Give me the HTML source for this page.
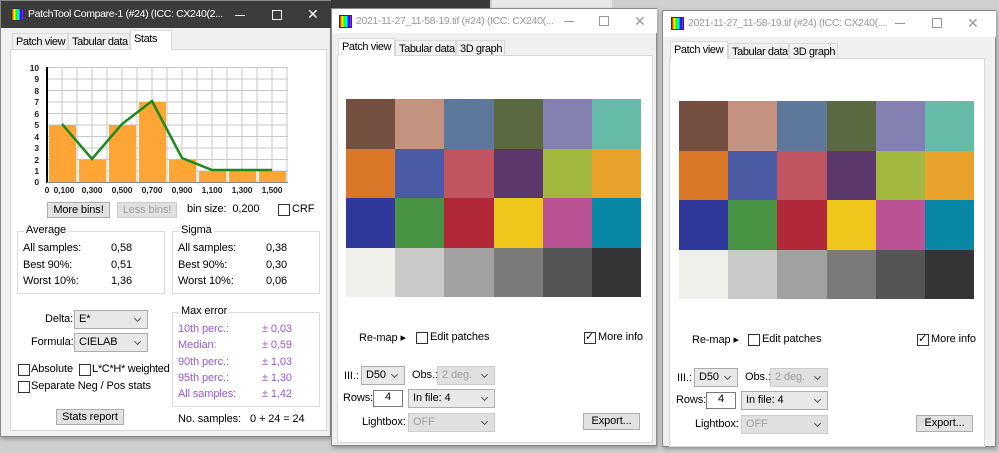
<!DOCTYPE html>
<html><head><meta charset="utf-8"><style>
*{box-sizing:border-box;margin:0;padding:0}
body{width:999px;height:453px;overflow:hidden;background:#cfcfcf;font-family:"Liberation Sans",sans-serif;font-size:11px;color:#000;position:relative;letter-spacing:-0.1px}
.a{position:absolute;white-space:nowrap}
.win{position:absolute;background:#f0f0f0;border:1px solid #888;box-shadow:1px 2px 4px rgba(0,0,0,.3)}
.panel{position:absolute;background:#fff;border:1px solid #d9d9d9}
.tab{position:absolute;background:#f0f0f0;border:1px solid #d9d9d9;padding:2px 3px;font-size:11px;white-space:nowrap;letter-spacing:-0.4px;overflow:hidden}
.tab.on{background:#fff;border-bottom:none;z-index:2}
.btn{position:absolute;background:#e1e1e1;border:1px solid #adadad;text-align:center;font-size:11px;white-space:nowrap;line-height:14px}
.cb{position:absolute;width:12px;height:12px;border:1px solid #333;background:#fff}
.combo{position:absolute;background:#e8e8e8;border:1px solid #adadad;padding:2px 4px;font-size:11px;white-space:nowrap}
.combo:after{content:"";position:absolute;right:7px;top:5px;width:4px;height:4px;border-right:1px solid #555;border-bottom:1px solid #555;transform:rotate(45deg)}
.dis{color:#a0a0a0;background:#e0e0e0;border-color:#ccc}
.grp{position:absolute;border:1px solid #dcdcdc}
.grp>.t{position:absolute;top:-8px;left:6px;background:#fff;padding:0 2px}
.icon{position:absolute;width:13px;height:13px;background:linear-gradient(90deg,#f00,#ff0,#0f0,#0ff,#00f,#f0f);border:1px solid #333}
.p{color:#9b59d8}
.tt{font-size:10.5px;letter-spacing:-0.35px}
.mn{position:absolute;width:10px;height:1px}
.mx{position:absolute;width:10px;height:10px}
</style></head><body>
<div class="a" style="left:330px;top:0;width:160px;height:8px;background:#3a3a3a"></div>
<div class="a" style="left:492px;top:0;width:120px;height:8px;background:#e8e8e8"></div>

<!-- LEFT WINDOW -->
<div class="win" style="left:0;top:0;width:331px;height:437px">
 <div class="a" style="left:0;top:0;width:330px;height:27px;background:#3c3c3c"></div>
 <div class="icon" style="left:10px;top:7px"></div>
 <div class="a tt" style="left:27px;top:7px;color:#fff">PatchTool Compare-1 (#24) (ICC: CX240(2...</div>
 <div class="mn" style="left:234px;top:14px;background:#fff"></div>
 <div class="mx" style="left:271px;top:9px;border:1px solid #fff"></div>
 <div class="a" style="left:306px;top:5px;color:#fff;font-size:14px">✕</div>
 <div class="panel" style="left:9px;top:48px;width:317px;height:382px"></div>
 <div class="tab" style="left:11px;top:32px;height:17px;width:56px">Patch view</div>
 <div class="tab" style="left:67px;top:32px;height:17px;width:62px">Tabular data</div>
 <div class="tab on" style="left:129px;top:29px;height:20px;width:42px">Stats</div>
 <svg class="a" style="left:20px;top:60px" width="280" height="140">
  <g stroke="#c8c8c8" stroke-width="1">
   <line x1="26" y1="6.5" x2="267" y2="6.5"/><line x1="26" y1="18" x2="267" y2="18"/><line x1="26" y1="29.5" x2="267" y2="29.5"/><line x1="26" y1="41" x2="267" y2="41"/><line x1="26" y1="52.5" x2="267" y2="52.5"/><line x1="26" y1="64" x2="267" y2="64"/><line x1="26" y1="75.5" x2="267" y2="75.5"/><line x1="26" y1="87" x2="267" y2="87"/><line x1="26" y1="98.5" x2="267" y2="98.5"/><line x1="26" y1="110" x2="267" y2="110"/>
   <line x1="41" y1="6" x2="41" y2="121"/><line x1="56" y1="6" x2="56" y2="121"/><line x1="71" y1="6" x2="71" y2="121"/><line x1="86" y1="6" x2="86" y2="121"/><line x1="101" y1="6" x2="101" y2="121"/><line x1="116" y1="6" x2="116" y2="121"/><line x1="131" y1="6" x2="131" y2="121"/><line x1="146" y1="6" x2="146" y2="121"/><line x1="161" y1="6" x2="161" y2="121"/><line x1="176" y1="6" x2="176" y2="121"/><line x1="191" y1="6" x2="191" y2="121"/><line x1="206" y1="6" x2="206" y2="121"/><line x1="221" y1="6" x2="221" y2="121"/><line x1="236" y1="6" x2="236" y2="121"/><line x1="251" y1="6" x2="251" y2="121"/><line x1="266" y1="6" x2="266" y2="121"/>
  </g>
  <g fill="#ffa535">
   <rect x="28" y="64" width="27" height="57"/><rect x="58" y="98.5" width="27" height="22.5"/><rect x="88" y="64" width="27" height="57"/><rect x="118" y="41" width="27" height="80"/><rect x="148" y="98.5" width="27" height="22.5"/><rect x="178" y="110" width="27" height="11"/><rect x="208" y="110" width="27" height="11"/><rect x="238" y="110" width="27" height="11"/>
  </g>
  <line x1="26" y1="6" x2="26" y2="122" stroke="#000" stroke-width="2"/>
  <line x1="26" y1="121.5" x2="267" y2="121.5" stroke="#888"/>
  <polyline points="41,63 71,98 101,63 131,40 161,97 191,109 221,109 251,109" fill="none" stroke="#1a8a1a" stroke-width="2.5"/>
  <g font-size="8.5" font-family="Liberation Sans" text-anchor="end" font-weight="bold" fill="#222">
   <text x="18" y="10">10</text><text x="18" y="21">9</text><text x="18" y="33">8</text><text x="18" y="44">7</text><text x="18" y="56">6</text><text x="18" y="67">5</text><text x="18" y="79">4</text><text x="18" y="90">3</text><text x="18" y="102">2</text><text x="18" y="113">1</text><text x="18" y="124">0</text>
  </g>
  <g font-size="8.5" font-family="Liberation Sans" text-anchor="middle" font-weight="bold" fill="#222">
   <text x="26" y="132">0</text><text x="43" y="132">0,100</text><text x="71" y="132">0,300</text><text x="101" y="132">0,500</text><text x="131" y="132">0,700</text><text x="161" y="132">0,900</text><text x="191" y="132">1,100</text><text x="221" y="132">1,300</text><text x="251" y="132">1,500</text>
  </g>
 </svg>
 <div class="btn" style="left:46px;top:201px;width:63px;height:16px">More bins!</div>
 <div class="btn dis" style="left:116px;top:201px;width:60px;height:16px">Less bins!</div>
 <div class="a" style="left:186px;top:202px">bin size:&nbsp; 0,200</div>
 <div class="cb" style="left:277px;top:203px"></div><div class="a" style="left:291px;top:202px">CRF</div>

 <div class="grp" style="left:16px;top:230px;width:148px;height:63px"><span class="t">Average</span></div>
 <div class="a" style="left:22px;top:241px">All samples:</div><div class="a" style="left:110px;top:241px">0,58</div>
 <div class="a" style="left:22px;top:258px">Best 90%:</div><div class="a" style="left:110px;top:258px">0,51</div>
 <div class="a" style="left:22px;top:274px">Worst 10%:</div><div class="a" style="left:110px;top:274px">1,36</div>
 <div class="grp" style="left:171px;top:230px;width:148px;height:63px"><span class="t">Sigma</span></div>
 <div class="a" style="left:177px;top:241px">All samples:</div><div class="a" style="left:265px;top:241px">0,38</div>
 <div class="a" style="left:177px;top:258px">Best 90%:</div><div class="a" style="left:265px;top:258px">0,30</div>
 <div class="a" style="left:177px;top:274px">Worst 10%:</div><div class="a" style="left:265px;top:274px">0,06</div>

 <div class="a" style="left:44px;top:312px">Delta:</div>
 <div class="combo" style="left:73px;top:309px;width:74px;height:19px">E*</div>
 <div class="a" style="left:30px;top:335px">Formula:</div>
 <div class="combo" style="left:73px;top:332px;width:74px;height:19px">CIELAB</div>
 <div class="cb" style="left:17px;top:363px"></div><div class="a" style="left:30px;top:362px">Absolute</div>
 <div class="cb" style="left:78px;top:363px"></div><div class="a" style="left:91px;top:362px;letter-spacing:-0.3px">L*C*H* weighted</div>
 <div class="cb" style="left:17px;top:380px"></div><div class="a" style="left:30px;top:379px">Separate Neg / Pos stats</div>
 <div class="btn" style="left:55px;top:408px;width:68px;height:16px">Stats report</div>

 <div class="grp" style="left:171px;top:311px;width:148px;height:95px"><span class="t">Max error</span></div>
 <div class="a p" style="left:177px;top:322px">10th perc.:</div><div class="a p" style="left:261px;top:322px">± 0,03</div>
 <div class="a p" style="left:177px;top:338px">Median:</div><div class="a p" style="left:261px;top:338px">± 0,59</div>
 <div class="a p" style="left:177px;top:355px">90th perc.:</div><div class="a p" style="left:261px;top:355px">± 1,03</div>
 <div class="a p" style="left:177px;top:371px">95th perc.:</div><div class="a p" style="left:261px;top:371px">± 1,30</div>
 <div class="a p" style="left:177px;top:387px">All samples:</div><div class="a p" style="left:261px;top:387px">± 1,42</div>
 <div class="a" style="left:177px;top:412px">No. samples:</div><div class="a" style="left:249px;top:412px">0 + 24 = 24</div>
</div>

<!-- MIDDLE WINDOW -->
<div class="win" style="left:331px;top:8px;width:326px;height:438px">
 <div class="a" style="left:0;top:0;width:325px;height:24px;background:#fff"></div>
 <div class="icon" style="left:7px;top:6px"></div>
 <div class="a tt" style="left:24px;top:6px;color:#999">2021-11-27_11-58-19.tif (#24) (ICC: CX240(...</div>
 <div class="mn" style="left:232px;top:12px;background:#999"></div>
 <div class="mx" style="left:267px;top:7px;border:1px solid #999"></div>
 <div class="a" style="left:302px;top:4px;color:#999;font-size:14px">✕</div>
 <div class="panel" style="left:5px;top:46px;width:316px;height:388px"></div>
 <div class="tab on" style="left:6px;top:29px;height:18px;width:57px">Patch view</div>
 <div class="tab" style="left:63px;top:31px;height:16px;width:61px">Tabular data</div>
 <div class="tab" style="left:124px;top:31px;height:16px;width:49px">3D graph</div>
</div>
<div class="a" style="left:346px;top:99px;width:295px;height:198px;display:grid;grid-template-columns:repeat(6,1fr);grid-template-rows:repeat(4,1fr)">
<div style="background:#744f40"></div><div style="background:#c3937f"></div><div style="background:#5d789a"></div><div style="background:#5b6941"></div><div style="background:#8480b2"></div><div style="background:#65bba8"></div>
<div style="background:#da7827"></div><div style="background:#4a5aa5"></div><div style="background:#c15461"></div><div style="background:#5a386b"></div><div style="background:#a2b93d"></div><div style="background:#e8a12a"></div>
<div style="background:#31389b"></div><div style="background:#489444"></div><div style="background:#b12938"></div><div style="background:#efc71b"></div><div style="background:#b95393"></div><div style="background:#0887a6"></div>
<div style="background:#f0f0eb"></div><div style="background:#c9c9c9"></div><div style="background:#a1a1a1"></div><div style="background:#7a7a79"></div><div style="background:#545454"></div><div style="background:#343434"></div>
</div>
<div class="a" style="left:359px;top:331px">Re-map ▸</div>
<div class="cb" style="left:416px;top:332px"></div><div class="a" style="left:430px;top:331px">Edit patches</div>
<div class="cb" style="left:584px;top:332px;font-size:11px;line-height:9px">✓</div><div class="a" style="left:598px;top:331px">More info</div>
<div class="a" style="left:344px;top:370px">III.:</div>
<div class="combo" style="left:361px;top:366px;width:44px;height:19px">D50</div>
<div class="a" style="left:412px;top:369px">Obs.:</div>
<div class="combo dis" style="left:437px;top:366px;width:58px;height:19px">2 deg.</div>
<div class="a" style="left:343px;top:392px">Rows:</div>
<div class="a" style="left:373px;top:390px;width:30px;height:17px;border:1px solid #7a7a7a;background:#fff;text-align:center">4</div>
<div class="combo" style="left:408px;top:389px;width:87px;height:19px">In file: 4</div>
<div class="a" style="left:362px;top:416px">Lightbox:</div>
<div class="combo dis" style="left:408px;top:413px;width:87px;height:19px">OFF</div>
<div class="btn" style="left:583px;top:413px;width:57px;height:17px">Export...</div>

<!-- RIGHT WINDOW -->
<div class="win" style="left:662px;top:10px;width:334px;height:437px">
 <div class="a" style="left:0;top:0;width:333px;height:26px;background:#fff"></div>
 <div class="icon" style="left:8px;top:6px"></div>
 <div class="a tt" style="left:25px;top:6px;color:#999">2021-11-27_11-58-19.tif (#24) (ICC: CX240(...</div>
 <div class="mn" style="left:232px;top:12px;background:#999"></div>
 <div class="mx" style="left:269px;top:7px;border:1px solid #999"></div>
 <div class="a" style="left:304px;top:4px;color:#999;font-size:14px">✕</div>
 <div class="panel" style="left:6px;top:47px;width:316px;height:389px"></div>
 <div class="tab on" style="left:7px;top:30px;height:18px;width:58px">Patch view</div>
 <div class="tab" style="left:65px;top:32px;height:16px;width:61px">Tabular data</div>
 <div class="tab" style="left:126px;top:32px;height:16px;width:49px">3D graph</div>
</div>
<div class="a" style="left:679px;top:101px;width:295px;height:198px;display:grid;grid-template-columns:repeat(6,1fr);grid-template-rows:repeat(4,1fr)">
<div style="background:#744f40"></div><div style="background:#c3937f"></div><div style="background:#5d789a"></div><div style="background:#5b6941"></div><div style="background:#8480b2"></div><div style="background:#65bba8"></div>
<div style="background:#da7827"></div><div style="background:#4a5aa5"></div><div style="background:#c15461"></div><div style="background:#5a386b"></div><div style="background:#a2b93d"></div><div style="background:#e8a12a"></div>
<div style="background:#31389b"></div><div style="background:#489444"></div><div style="background:#b12938"></div><div style="background:#efc71b"></div><div style="background:#b95393"></div><div style="background:#0887a6"></div>
<div style="background:#f0f0eb"></div><div style="background:#c9c9c9"></div><div style="background:#a1a1a1"></div><div style="background:#7a7a79"></div><div style="background:#545454"></div><div style="background:#343434"></div>
</div>
<div class="a" style="left:692px;top:333px">Re-map ▸</div>
<div class="cb" style="left:748px;top:334px"></div><div class="a" style="left:762px;top:333px">Edit patches</div>
<div class="cb" style="left:917px;top:334px;font-size:11px;line-height:9px">✓</div><div class="a" style="left:931px;top:333px">More info</div>
<div class="a" style="left:677px;top:372px">III.:</div>
<div class="combo" style="left:694px;top:368px;width:44px;height:19px">D50</div>
<div class="a" style="left:745px;top:371px">Obs.:</div>
<div class="combo dis" style="left:770px;top:368px;width:58px;height:19px">2 deg.</div>
<div class="a" style="left:676px;top:394px">Rows:</div>
<div class="a" style="left:706px;top:392px;width:30px;height:17px;border:1px solid #7a7a7a;background:#fff;text-align:center">4</div>
<div class="combo" style="left:741px;top:391px;width:87px;height:19px">In file: 4</div>
<div class="a" style="left:695px;top:418px">Lightbox:</div>
<div class="combo dis" style="left:741px;top:415px;width:87px;height:19px">OFF</div>
<div class="btn" style="left:916px;top:415px;width:57px;height:17px">Export...</div>
</body></html>
